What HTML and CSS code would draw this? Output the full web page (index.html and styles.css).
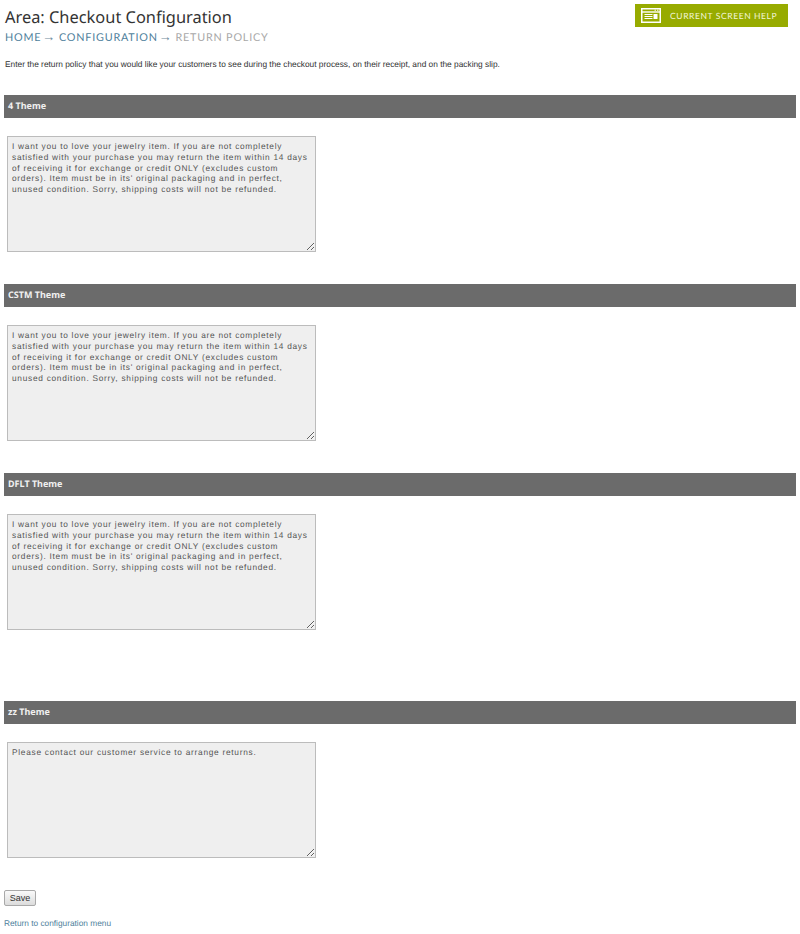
FILE: index.html
```html
<!DOCTYPE html>
<html lang="en">
<head>
<meta charset="UTF-8">
<title>Area: Checkout Configuration</title>
<link rel="stylesheet" href="styles.css">
</head>
<body>
  <div class="top">
    <div>
      <h1>Area: Checkout Configuration</h1>
      <div class="crumbs">
        <a href="#">Home</a><span class="arrow">→</span>
        <a href="#">Configuration</a><span class="arrow">→</span>
        <span class="current">Return Policy</span>
      </div>
    </div>
    <a class="help" href="#">
      <svg width="20" height="15" viewBox="0 0 20 15" fill="none" stroke="#fff">
        <rect x="0.75" y="0.75" width="18.5" height="13.5" stroke-width="1.5"/>
        <path d="M1 4h18" stroke-width="1.4"/>
        <path d="M13.5 2.2h1.5M16 2.2h1.5" stroke-width="1"/>
        <path d="M3.5 6.5h8M3.5 8.5h8M3.5 10.5h8" stroke-width="1"/>
        <rect x="12.5" y="6" width="4" height="5" fill="#fff" stroke="none"/>
      </svg>
      <span>Current Screen Help</span>
    </a>
  </div>

  <p class="intro">Enter the return policy that you would like your customers to see during the checkout process, on their receipt, and on the packing slip.</p>

  <form>
    <div class="section">
      <h2>4 Theme</h2>
      <textarea>I want you to love your jewelry item. If you are not completely satisfied with your purchase you may return the item within 14 days of receiving it for exchange or credit ONLY (excludes custom orders). Item must be in its' original packaging and in perfect, unused condition. Sorry, shipping costs will not be refunded.</textarea>
    </div>
    <div class="section">
      <h2>CSTM Theme</h2>
      <textarea>I want you to love your jewelry item. If you are not completely satisfied with your purchase you may return the item within 14 days of receiving it for exchange or credit ONLY (excludes custom orders). Item must be in its' original packaging and in perfect, unused condition. Sorry, shipping costs will not be refunded.</textarea>
    </div>
    <div class="section spaced">
      <h2>DFLT Theme</h2>
      <textarea>I want you to love your jewelry item. If you are not completely satisfied with your purchase you may return the item within 14 days of receiving it for exchange or credit ONLY (excludes custom orders). Item must be in its' original packaging and in perfect, unused condition. Sorry, shipping costs will not be refunded.</textarea>
    </div>
    <div class="section">
      <h2>zz Theme</h2>
      <textarea>Please contact our customer service to arrange returns.</textarea>
    </div>
    <button type="button" class="save">Save</button>
  </form>

  <a class="back" href="#">Return to configuration menu</a>
</body>
</html>
```

FILE: styles.css
```css
body {
  margin: 0;
  padding: 0 4px;
  background-color: #fff;
  color: #333;
  font-family: "Liberation Sans", Arial, sans-serif;
  font-size: 9px;
  text-rendering: geometricPrecision;
}

.top {
  display: flex;
  justify-content: space-between;
  align-items: flex-start;
  padding-top: 5px;
}

h1 {
  margin: 0;
  padding-left: 1px;
  font-family: "Noto Sans", sans-serif;
  font-size: 16.4px;
  font-weight: 400;
  line-height: 24px;
  color: #333;
}

.crumbs {
  margin-top: 1px;
  padding-left: 1px;
  font-family: Lato, sans-serif;
  font-size: 10.8px;
  line-height: 16px;
  letter-spacing: 0.8px;
  text-transform: uppercase;
  white-space: nowrap;
}

.crumbs a {
  color: #4f7f9c;
  text-decoration: none;
}

.crumbs .arrow {
  color: #6f8a9c;
  margin-left: 1px;
  font-family: "Liberation Sans", Arial, sans-serif;
  font-size: 13px;
  line-height: 1;
  letter-spacing: 0;
}

.crumbs .current {
  color: #a8a8a8;
}

.help {
  display: flex;
  align-items: center;
  gap: 9px;
  width: 153px;
  height: 23px;
  margin: -1px 8px 0 0;
  padding-left: 6px;
  box-sizing: border-box;
  background-color: #97ab00;
  color: #f2f5d8;
  font-family: Lato, sans-serif;
  font-size: 8.5px;
  letter-spacing: 0.6px;
  text-transform: uppercase;
  text-decoration: none;
  white-space: nowrap;
}

.intro {
  margin: 13px 0 0;
  padding-left: 1px;
  font-size: 8.33px;
  line-height: 11px;
  color: #333;
}

form {
  margin-top: 25px;
}

.section {
  margin-bottom: 32px;
}

.section.spaced {
  margin-bottom: 71px;
}

h2 {
  margin: 0 0 18px;
  height: 23px;
  padding-left: 4px;
  background-color: #6b6b6b;
  color: #f0f0f0;
  font-family: "Noto Sans", sans-serif;
  font-size: 9px;
  font-weight: 700;
  line-height: 21px;
}

textarea {
  display: block;
  box-sizing: border-box;
  width: 309px;
  height: 116px;
  margin: 0 0 0 3px;
  padding: 4px;
  border: 1px solid #bcbcbc;
  border-radius: 0;
  background-color: #efefef;
  color: #555;
  font-family: "Liberation Sans", Arial, sans-serif;
  font-size: 8.3px;
  line-height: 10.8px;
  letter-spacing: 0.73px;
  text-rendering: geometricPrecision;
}

.save {
  display: block;
  width: 32px;
  height: 16px;
  padding: 0;
  border: 1px solid #a9a9a9;
  border-radius: 2px;
  background: linear-gradient(#fafafa, #dcdcdc);
  color: #333;
  font-family: "Liberation Sans", Arial, sans-serif;
  font-size: 9px;
}

.back {
  display: block;
  margin-top: 12px;
  color: #4f7f9c;
  font-size: 8.3px;
  line-height: 11px;
  text-decoration: none;
}
```
